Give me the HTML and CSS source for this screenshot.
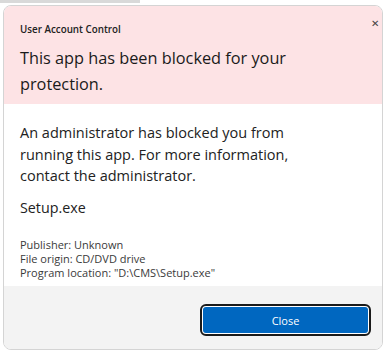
FILE: index.html
```html
<!DOCTYPE html>
<html>
<head>
<meta charset="utf-8">
<link rel="stylesheet" href="styles.css">
</head>
<body>
<div class="topbar"></div>
<div class="dialog">
  <div class="header">
    <div class="titlerow">
      <span class="apptitle">User Account Control</span>
      <span class="x">&#x2715;</span>
    </div>
    <div class="heading">This app has been blocked for your protection.</div>
  </div>
  <div class="body">
    <p class="msg">An administrator has blocked you from running this app. For more information, contact the administrator.</p>
    <p class="file">Setup.exe</p>
    <div class="details">
      <div>Publisher: Unknown</div>
      <div>File origin: CD/DVD drive</div>
      <div>Program location: "D:\CMS\Setup.exe"</div>
    </div>
  </div>
  <div class="footer">
    <button class="btn"><span>Close</span></button>
  </div>
</div>
</body>
</html>
```
FILE: styles.css
```css
html, body {
  margin: 0;
  padding: 0;
  background: #ffffff;
  width: 389px;
  height: 353px;
  overflow: hidden;
  font-family: "Open Sans", "Noto Sans", sans-serif;
  color: #1f1f1f;
}
.topbar {
  width: 140px;
  height: 3px;
  background: #d9d9d9;
}
.dialog {
  margin: 2px 6px 0 3px;
  height: 343px;
  border: 1px solid #d4d4d4;
  border-radius: 8px;
  overflow: hidden;
  display: flex;
  flex-direction: column;
  background: #fff;
}
.header {
  background: #fde3e5;
  padding: 16px 20px 0 16px;
  height: 82px;
}
.titlerow {
  display: flex;
  justify-content: space-between;
  align-items: flex-start;
}
.apptitle {
  font-size: 9.8px;
  line-height: 16px;
  color: #222;
  font-weight: 600;
}
.x {
  font-size: 10px;
  color: #444;
  margin-right: -17px;
  margin-top: -6px;
}
.heading {
  margin-top: 7px;
  font-size: 16.3px;
  line-height: 26px;
  color: #1a1a1a;
  width: 310px;
}
.body {
  padding: 18px 20px 0 16px;
  height: 164px;
}
.msg {
  margin: 0;
  font-size: 14.5px;
  line-height: 21.5px;
  width: 290px;
  color: #222;
}
.file {
  margin: 10px 0 0 0;
  font-size: 14.3px;
  line-height: 21px;
  color: #222;
}
.details {
  margin-top: 20px;
  font-size: 11px;
  line-height: 14px;
  color: #3a3a3a;
}
.footer {
  flex: 1;
  background: #f3f3f3;
  display: flex;
  justify-content: flex-end;
  padding: 18px 11px 0 0;
}
.btn {
  width: 171px;
  height: 32px;
  border: 2px solid #1a1a1a;
  border-radius: 6px;
  padding: 1px;
  background: #fff;
  display: flex;
}
.btn span {
  flex: 1;
  background: #0067c0;
  border-radius: 3px;
  color: #fff;
  font-family: "Open Sans", "Noto Sans", sans-serif;
  font-size: 11px;
  display: flex;
  align-items: center;
  justify-content: center;
}
```
